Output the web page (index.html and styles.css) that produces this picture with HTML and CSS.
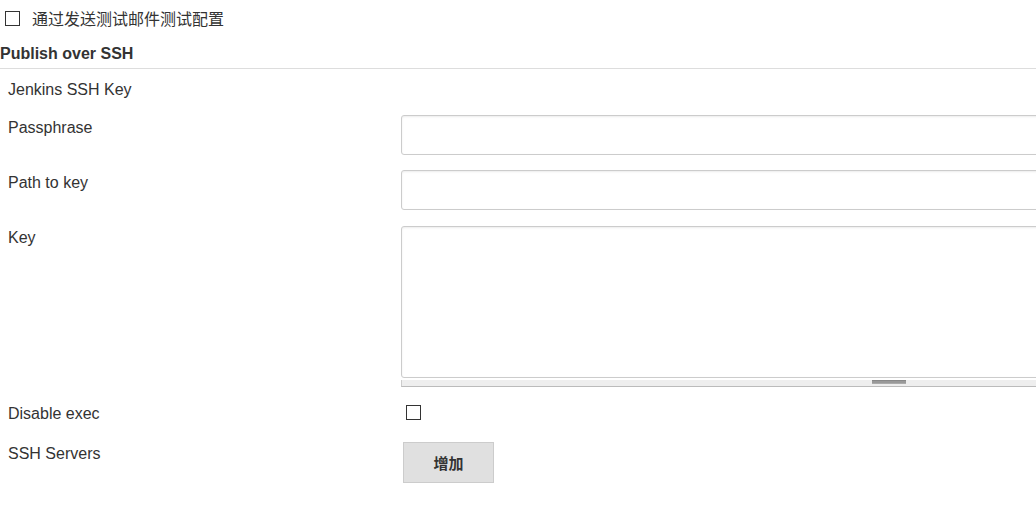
FILE: index.html
```html
<!DOCTYPE html>
<html lang="zh-CN">
<head>
  <meta charset="UTF-8" />
  <title>Publish over SSH</title>
  <link rel="stylesheet" href="styles.css">
</head>
<body>
  <div class="page">
    <div class="test-row">
      <input type="checkbox" class="check" id="testmail" />
      <label for="testmail" class="test-label">通过发送测试邮件测试配置</label>
    </div>

    <div class="section-title">Publish over SSH</div>

    <div class="form">
      <div class="label label-only">Jenkins SSH Key</div>
      <div></div>

      <label class="label" for="passphrase">Passphrase</label>
      <div class="field"><input type="password" id="passphrase" class="text" /></div>

      <label class="label" for="keypath">Path to key</label>
      <div class="field"><input type="text" id="keypath" class="text" /></div>

      <label class="label" for="key">Key</label>
      <div class="field field-area">
        <textarea id="key" class="area"></textarea>
        <div class="grip"><span class="grip-handle"></span></div>
      </div>

      <label class="label label-check" for="noexec">Disable exec</label>
      <div class="field field-check"><input type="checkbox" id="noexec" class="check" /></div>

      <div class="label label-button">SSH Servers</div>
      <div class="field field-button"><button class="add">增加</button></div>
    </div>
  </div>
</body>
</html>
```

FILE: styles.css
```css
body {
  margin: 0;
  font-family: "Liberation Sans", Arial, "Noto Sans CJK SC", sans-serif;
  font-size: 16px;
  color: #333;
  background: #fff;
  overflow: hidden;
}
.page {
  width: 1080px;
}
.test-row {
  display: flex;
  align-items: center;
  height: 36px;
  padding-left: 5px;
}
.test-label {
  margin-left: 12px;
  font-family: "Noto Sans CJK SC", sans-serif;
  font-size: 16px;
  line-height: 20px;
}
.check {
  appearance: none;
  -webkit-appearance: none;
  margin: 0;
  width: 15px;
  height: 15px;
  border: 1px solid #333;
  background: #fff;
  box-sizing: border-box;
}
.section-title {
  font-weight: bold;
  line-height: 20px;
  padding: 8px 0 4px;
  border-bottom: 1px solid #ddd;
}
.form {
  display: grid;
  grid-template-columns: 401px 1fr;
}
.label {
  padding-left: 8px;
  line-height: 20px;
}
.field {
  padding: 9px 0 6px;
}
.form > .label {
  padding-top: 12px;
}
.form > .label-only {
  padding-top: 11px;
  padding-bottom: 6px;
}
.text {
  display: block;
  width: 100%;
  height: 40px;
  box-sizing: border-box;
  border: 1px solid #ccc;
  border-radius: 3px;
  box-shadow: inset 0 1px 2px rgba(0,0,0,0.08);
  padding: 4px 8px;
  font: inherit;
}
.field-area {
  padding-top: 10px;
}
.area {
  display: block;
  width: 100%;
  height: 152px;
  box-sizing: border-box;
  border: 1px solid #ccc;
  border-radius: 3px;
  box-shadow: inset 0 1px 2px rgba(0,0,0,0.08);
  resize: none;
  font: inherit;
}
.grip {
  height: 6px;
  margin-top: 2px;
  background: #eee;
  border-bottom: 1px solid #bbb;
  border-left: 1px solid #ccc;
  padding-left: 470px;
}
.grip-handle {
  display: block;
  width: 34px;
  height: 4px;
  margin-top: 1px;
  background: #999;
  border-top: 1px solid #888;
  border-bottom: 1px solid #aaa;
  box-sizing: border-box;
}
.form > .label-check {
  padding-top: 11px;
}
.field-check {
  padding: 12px 0 0 5px;
}
.form > .label-button {
  padding-top: 20px;
}
.field-button {
  padding: 18px 0 0 2px;
}
.add {
  width: 91px;
  height: 41px;
  background: #e0e0e0;
  border: 1px solid #ccc;
  color: #333;
  font-family: "Noto Sans CJK SC", sans-serif;
  font-size: 15px;
  font-weight: bold;
  cursor: pointer;
}
```
